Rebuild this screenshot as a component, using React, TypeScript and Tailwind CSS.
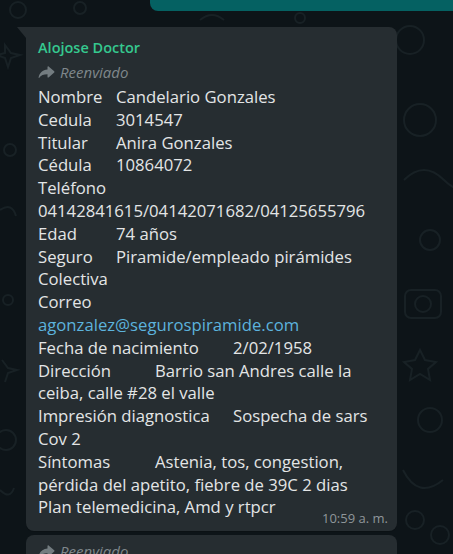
import React from "react";

type Line = { label?: string; col?: number; value?: string; text?: string; link?: boolean };

// col = x offset of the value column (tab stops in the original message)
const lines: Line[] = [
  { label: "Nombre", col: 78, value: "Candelario Gonzales" },
  { label: "Cedula", col: 78, value: "3014547" },
  { label: "Titular", col: 78, value: "Anira Gonzales" },
  { label: "Cédula", col: 78, value: "10864072" },
  { text: "Teléfono" },
  { text: "04142841615/04142071682/04125655796" },
  { label: "Edad", col: 78, value: "74 años" },
  { label: "Seguro", col: 78, value: "Piramide/empleado pirámides" },
  { text: "Colectiva" },
  { text: "Correo" },
  { text: "agonzalez@segurospiramide.com", link: true },
  { label: "Fecha de nacimiento", col: 195, value: "2/02/1958" },
  { label: "Dirección", col: 117, value: "Barrio san Andres calle la" },
  { text: "ceiba, calle #28 el valle" },
  { label: "Impresión diagnostica", col: 195, value: "Sospecha de sars" },
  { text: "Cov 2" },
  { label: "Síntomas", col: 117, value: "Astenia, tos, congestion," },
  { text: "pérdida del apetito, fiebre de 39C 2 dias" },
  { text: "Plan telemedicina, Amd y rtpcr" },
];

const colClass: Record<number, string> = {
  78: "w-[78px]",
  117: "w-[117px]",
  195: "w-[195px]",
};

function ForwardIcon() {
  return (
    <svg width="17" height="14" viewBox="0 0 17 14" className="shrink-0">
      <path
        d="M16.2 6.2 10.6 1.4c-.5-.4-1.1-.1-1.1.5v2.6C4.6 5 1.2 7.9.6 12.8c0 .3.3.4.5.1 1.7-2.6 4.6-3.6 8.4-3.6v2.6c0 .6.7.9 1.1.5l5.6-4.8c.4-.4.4-1 0-1.4Z"
        fill="#737c80"
      />
    </svg>
  );
}

function Doodles() {
  return (
    <svg className="absolute inset-0" width="453" height="554" viewBox="0 0 453 554">
      <g fill="none" stroke="#182125" strokeWidth="2">
        <circle cx="18" cy="10" r="8" />
        <circle cx="410" cy="40" r="14" />
        <path d="M5 45 l6 8 l9 2 l-9 3 l-3 9 l-3 -9 l-8 -3 l8 -2 Z" />
        <circle cx="420" cy="120" r="16" />
        <path d="M404 180 q20 -20 40 0 t40 0" />
        <circle cx="430" cy="240" r="10" />
        <rect x="405" y="290" width="36" height="28" rx="6" />
        <circle cx="423" cy="304" r="8" />
        <path d="M420 350 l5 10 l11 2 l-8 7 l2 11 l-10 -6 l-10 6 l2 -11 l-8 -7 l11 -2 Z" />
        <circle cx="430" cy="420" r="12" />
        <path d="M403 470 q15 30 40 10" />
        <circle cx="415" cy="520" r="9" />
        <circle cx="440" cy="535" r="9" />
        <circle cx="10" cy="150" r="6" />
        <path d="M0 210 q12 -8 16 6" />
        <circle cx="8" cy="300" r="5" />
        <path d="M2 360 l6 8 l9 2 l-9 3 l-3 9" />
        <circle cx="6" cy="440" r="10" />
        <path d="M0 490 q10 10 14 -2" />
        <circle cx="80" cy="8" r="6" />
        <path d="M200 20 q12 -10 24 0" />
        <circle cx="300" cy="18" r="5" />
      </g>
    </svg>
  );
}

export default function App() {
  return (
    <div
      className="relative w-[453px] h-[554px] overflow-hidden bg-[#0d1418] text-[#e3e5e6]"
      style={{ fontFamily: '"Segoe UI", "Open Sans", "Noto Sans", sans-serif' }}
    >
      <Doodles />
      <div className="relative flex flex-col">
        {/* outgoing bubble, cut off at top */}
        <div className="ml-[150px] -mt-[20px] h-[31px] rounded-bl-[8px] bg-[#056162] flex items-end justify-end">
          <span className="text-[12px] leading-[14px] text-[#a8c8c5] mr-[-3px] mb-[19px]">10:58</span>
        </div>

        {/* incoming bubble */}
        <div className="relative ml-[26px] mt-[16px] w-[371px] rounded-[8px] rounded-tl-none bg-[#262d31] px-[12px] pt-[10px] pb-[12px] shadow-[0_1px_0.5px_rgba(0,0,0,0.13)]">
          <svg className="absolute -left-[9px] top-0" width="9" height="11" viewBox="0 0 9 11">
            <path d="M0 0 H9 V11 Z" fill="#262d31" />
          </svg>
          <div className="text-[14.5px] font-semibold leading-[21px] text-[#35c88f]">Alojose Doctor</div>
          <div className="flex items-center gap-[5px] mt-[4px] text-[15px] italic leading-[20px] text-[#7f878b]">
            <ForwardIcon />
            <span>Reenviado</span>
          </div>
          <div className="mt-[4px] text-[16.7px] leading-[22.8px] whitespace-pre">
            {lines.map((l, i) =>
              l.label ? (
                <div key={i} className="flex">
                  <span className={`shrink-0 ${colClass[l.col ?? 78]}`}>{l.label}</span>
                  <span>{l.value}</span>
                </div>
              ) : (
                <div key={i} className={l.link ? "text-[#5cb3dd]" : ""}>
                  {l.text}
                </div>
              )
            )}
          </div>
          <span className="absolute right-[9px] bottom-[5px] text-[13px] leading-[16px] text-[#8f969a]">10:59 a. m.</span>
        </div>

        {/* next bubble */}
        <div className="ml-[26px] mt-[4px] w-[371px] rounded-t-[8px] bg-[#262d31] px-[12px] pt-[6px] h-[40px]">
          <div className="flex items-center gap-[5px] text-[15px] italic leading-[20px] text-[#7f878b]">
            <ForwardIcon />
            <span>Reenviado</span>
          </div>
        </div>
      </div>
    </div>
  );
}
